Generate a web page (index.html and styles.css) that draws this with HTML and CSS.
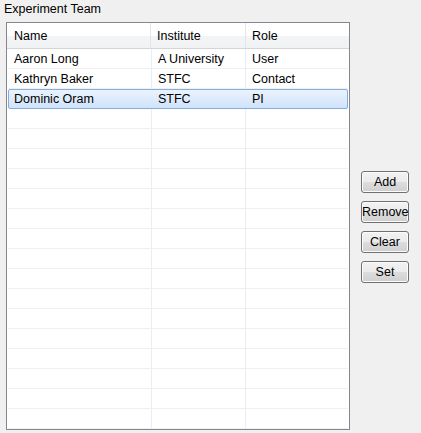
FILE: index.html
```html
<!DOCTYPE html>
<html>
<head>
<meta charset="utf-8">
<link rel="stylesheet" href="styles.css">
</head>
<body>
<div class="group">
  <div class="title">Experiment Team</div>
  <div class="main">
    <div class="table">
      <div class="row head">
        <div class="cell c1">Name</div>
        <div class="cell c2">Institute</div>
        <div class="cell c3">Role</div>
      </div>
      <div class="row"><div class="cell c1">Aaron Long</div><div class="cell c2">A University</div><div class="cell c3">User</div></div>
      <div class="row"><div class="cell c1">Kathryn Baker</div><div class="cell c2">STFC</div><div class="cell c3">Contact</div></div>
      <div class="row sel"><div class="cell c1">Dominic Oram</div><div class="cell c2">STFC</div><div class="cell c3">PI</div></div>
      <div class="row"><div class="cell c1"></div><div class="cell c2"></div><div class="cell c3"></div></div>
      <div class="row"><div class="cell c1"></div><div class="cell c2"></div><div class="cell c3"></div></div>
      <div class="row"><div class="cell c1"></div><div class="cell c2"></div><div class="cell c3"></div></div>
      <div class="row"><div class="cell c1"></div><div class="cell c2"></div><div class="cell c3"></div></div>
      <div class="row"><div class="cell c1"></div><div class="cell c2"></div><div class="cell c3"></div></div>
      <div class="row"><div class="cell c1"></div><div class="cell c2"></div><div class="cell c3"></div></div>
      <div class="row"><div class="cell c1"></div><div class="cell c2"></div><div class="cell c3"></div></div>
      <div class="row"><div class="cell c1"></div><div class="cell c2"></div><div class="cell c3"></div></div>
      <div class="row"><div class="cell c1"></div><div class="cell c2"></div><div class="cell c3"></div></div>
      <div class="row"><div class="cell c1"></div><div class="cell c2"></div><div class="cell c3"></div></div>
      <div class="row"><div class="cell c1"></div><div class="cell c2"></div><div class="cell c3"></div></div>
      <div class="row"><div class="cell c1"></div><div class="cell c2"></div><div class="cell c3"></div></div>
      <div class="row"><div class="cell c1"></div><div class="cell c2"></div><div class="cell c3"></div></div>
      <div class="row"><div class="cell c1"></div><div class="cell c2"></div><div class="cell c3"></div></div>
      <div class="row"><div class="cell c1"></div><div class="cell c2"></div><div class="cell c3"></div></div>
      <div class="row"><div class="cell c1"></div><div class="cell c2"></div><div class="cell c3"></div></div>
    </div>
    <div class="buttons">
      <button class="btn">Add</button>
      <button class="btn">Remove</button>
      <button class="btn">Clear</button>
      <button class="btn">Set</button>
    </div>
  </div>
</div>
</body>
</html>
```
FILE: styles.css
```css
html, body {
  margin: 0;
  padding: 0;
  background: #f0f0f0;
}
body {
  font-family: "Liberation Sans", Arial, sans-serif;
  font-size: 12.5px;
  color: #000;
  width: 421px;
  height: 433px;
  overflow: hidden;
}
.title {
  height: 22px;
  line-height: 19px;
  padding-left: 4px;
}
.main {
  display: flex;
  align-items: center;
  gap: 11px;
  padding-left: 6px;
}
.table {
  width: 342px;
  height: 406px;
  border: 1px solid #828790;
  background: #fff;
  overflow: hidden;
}
.row {
  display: flex;
  height: 19px;
  border-bottom: 1px solid #f0f0f0;
  margin: 0 1px;
}
.row .cell {
  line-height: 20px;
  padding-left: 6px;
  box-sizing: border-box;
  white-space: nowrap;
  overflow: hidden;
}
.c1 { width: 144px; border-right: 1px solid #e8eef7; }
.c2 { width: 94px; border-right: 1px solid #e8eef7; }
.c3 { flex: 1; }
.row.head {
  height: 25px;
  margin: 0;
  border-bottom: 1px solid #d5d5d5;
  background: linear-gradient(#ffffff, #ffffff 50%, #f3f4f6 51%, #f1f2f4);
}
.row.head .cell {
  line-height: 27px;
  border-right: 1px solid #e3e4e6;
}
.row.head .c1 { width: 144px; padding-left: 7px; }
.row.head .c2 { width: 95px; }
.row.head .c3 { border-right: none; }
.row.sel {
  border: 1px solid #84acdd;
  border-radius: 2px;
  height: 18px;
  background: linear-gradient(#eaf3fd, #d0e3fb);
  margin: 0 1px;
}
.row.sel .cell {
  line-height: 19px;
  border-right-color: transparent;
}
.row.sel .c1 { width: 143px; padding-left: 5px; }
.buttons {
  display: flex;
  flex-direction: column;
  gap: 8px;
  padding-top: 2px;
}
.btn {
  width: 48px;
  height: 22px;
  padding: 0;
  font-family: "Liberation Sans", Arial, sans-serif;
  font-size: 12.5px;
  color: #000;
  border: 1px solid #707070;
  border-radius: 3px;
  background: linear-gradient(#f2f2f2, #ebebeb 50%, #dddddd 51%, #cfcfcf);
  box-shadow: inset 0 0 0 1px #fcfcfc;
  white-space: nowrap;
}
```
